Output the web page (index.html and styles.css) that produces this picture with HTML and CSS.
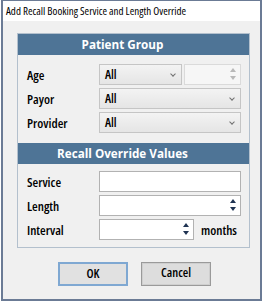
FILE: index.html
```html
<html>
<head>
<title>Add Recall Booking Service and Length Override</title>
<link rel="stylesheet" href="styles.css">
</head>
<body>
<div class="window">
	<div class="titlebar">Add Recall Booking Service and Length Override</div>
	<div class="client">
		<div class="panel">
			<div class="panel_head">Patient Group</div>
			<div class="rows group_rows">
				<div class="row">
					<div class="label">Age</div>
					<div class="select age_select">All<span class="chev"></span></div>
					<div class="spin disabled">
						<span class="arrows"><span class="up"></span><span class="down"></span></span>
					</div>
				</div>
				<div class="row">
					<div class="label">Payor</div>
					<div class="select wide">All<span class="chev"></span></div>
				</div>
				<div class="row">
					<div class="label">Provider</div>
					<div class="select wide">All<span class="chev"></span></div>
				</div>
			</div>
			<div class="panel_head">Recall Override Values</div>
			<div class="rows override_rows">
				<div class="row">
					<div class="label">Service</div>
					<div class="input wide"></div>
				</div>
				<div class="row">
					<div class="label">Length</div>
					<div class="input wide">
						<span class="arrows"><span class="up"></span><span class="down"></span></span>
					</div>
				</div>
				<div class="row">
					<div class="label">Interval</div>
					<div class="input interval">
						<span class="arrows"><span class="up"></span><span class="down"></span></span>
					</div>
					<div class="unit">months</div>
				</div>
			</div>
		</div>
		<div class="buttons">
			<div class="button default">OK</div>
			<div class="button">Cancel</div>
		</div>
	</div>
</div>
</body>
</html>
```

FILE: styles.css
```css
body{
	margin:0;
	background:#ffffff;
	font-family:"Open Sans", sans-serif;
	font-stretch:75%;
	color:#000000;
}
.window{
	margin-left:1px;
	width:261px;
	height:301px;
	box-sizing:border-box;
	border:2px solid #6b7b95;
	border-top-width:1px;
	display:flex;
	flex-direction:column;
}
.titlebar{
	height:20px;
	line-height:20px;
	padding-left:3px;
	font-size:11px;
	background:#ffffff;
	white-space:nowrap;
}
.client{
	flex:1;
	background:#f0f0f0;
	padding:12px 0 0 14px;
}
.panel{
	width:233px;
	box-sizing:border-box;
	border:1px solid #b3c0cd;
}
.panel_head{
	height:21px;
	line-height:21px;
	background:#4e7496;
	color:#ffffff;
	font-size:11.7px;
	font-weight:bold;
	font-stretch:100%;
	text-align:center;
	padding-right:22px;
}
.rows{
	display:flex;
	flex-direction:column;
	gap:3px;
	padding-left:9px;
}
.group_rows{
	padding-top:9px;
	padding-bottom:10px;
}
.override_rows{
	padding-top:7px;
	padding-bottom:7px;
}
.row{
	display:flex;
	align-items:center;
	height:21px;
}
.label{
	width:72px;
	font-size:13px;
	font-weight:600;
}
.select{
	position:relative;
	height:21px;
	line-height:19px;
	box-sizing:border-box;
	border:1px solid #c5c5c5;
	background:linear-gradient(#f3f3f3, #e5e5e5);
	padding-left:5px;
	font-size:12.5px;
	font-weight:600;
}
.age_select{
	width:83px;
	margin-right:2px;
}
.wide{
	width:142px;
}
.chev{
	position:absolute;
	right:6px;
	top:7px;
	width:3px;
	height:3px;
	border-right:1px solid #707070;
	border-bottom:1px solid #707070;
	transform:rotate(45deg);
}
.spin{
	position:relative;
	width:57px;
	height:21px;
	box-sizing:border-box;
	border:1px solid #dadada;
	background:#f6f6f6;
}
.input{
	position:relative;
	height:21px;
	box-sizing:border-box;
	border:1px solid #b2b2b2;
	background:#ffffff;
}
.interval{
	width:95px;
}
.arrows{
	position:absolute;
	right:4px;
	top:3px;
	display:flex;
	flex-direction:column;
	gap:4px;
}
.up{
	width:0;
	height:0;
	border-left:3px solid transparent;
	border-right:3px solid transparent;
	border-bottom:4px solid #1f3352;
}
.down{
	width:0;
	height:0;
	border-left:3px solid transparent;
	border-right:3px solid transparent;
	border-top:4px solid #1f3352;
}
.disabled .up{
	border-bottom-color:#b8b8b8;
}
.disabled .down{
	border-top-color:#b8b8b8;
}
.unit{
	margin-left:7px;
	font-size:13px;
	font-weight:600;
}
.buttons{
	display:flex;
	gap:13px;
	padding:14px 0 0 41px;
}
.button{
	width:70px;
	height:24px;
	line-height:20px;
	box-sizing:border-box;
	border:1px solid #9a9a9a;
	box-shadow:inset 0 0 0 1px #cfcfcf;
	background:#dddddd;
	text-align:center;
	font-size:12.5px;
	font-weight:600;
}
.default{
	border:2px solid #7fa8d2;
	box-shadow:none;
	background:#e1e1e1;
}
```
